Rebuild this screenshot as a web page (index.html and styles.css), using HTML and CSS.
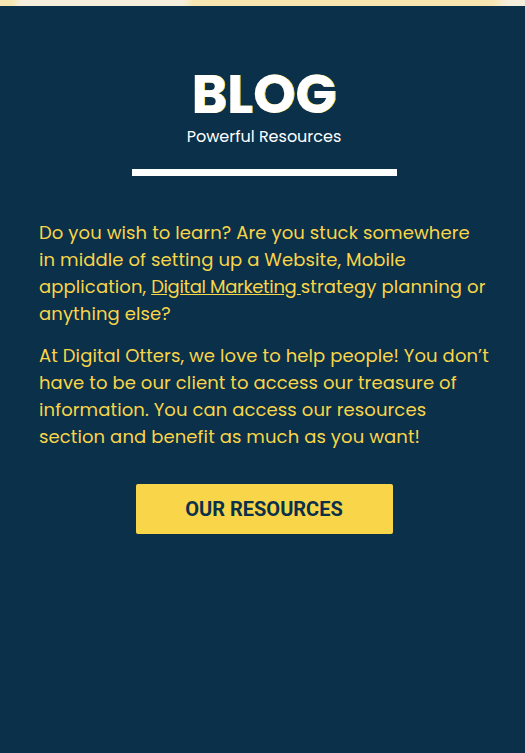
FILE: index.html
```html
<!DOCTYPE html>
<html lang="en">
<head>
<meta charset="utf-8">
<title>Blog</title>
<link rel="stylesheet" href="styles.css">
</head>
<body>
<div class="topstrip"></div>
<section class="blog">
  <header class="blog-head">
    <h1 class="blog-title">BLOG</h1>
    <p class="blog-sub">Powerful Resources</p>
    <div class="blog-rule"></div>
  </header>
  <div class="blog-text">
    <p>Do you wish to learn? Are you stuck somewhere in middle of setting up a Website, Mobile application, <a href="#">Digital Marketing </a>strategy planning or anything else?</p>
    <p>At Digital Otters, we love to help people! You don’t have to be our client to access our treasure of information. You can access our resources section and benefit as much as you want!</p>
  </div>
  <div class="blog-action">
    <a class="btn" href="#">OUR RESOURCES</a>
  </div>
</section>
</body>
</html>
```
FILE: styles.css
```css
html, body {
  margin: 0;
  padding: 0;
}
body {
  background: #0b3049;
  width: 525px;
  height: 753px;
  overflow: hidden;
  font-family: "Poppins", "Open Sans", "Noto Sans", sans-serif;
}
.topstrip {
  height: 6px;
  background: linear-gradient(100deg, #f7e6b1 0 12px, #f5eedc 20px 180px, #f7e6b1 192px 485px, #f5eedc 500px);
}
.blog {
  padding: 0 36px 0 39px;
}
.blog-head {
  display: flex;
  flex-direction: column;
  align-items: center;
  padding-top: 58px;
}
.blog-title {
  margin: 0;
  color: #fff;
  font-weight: 700;
  font-size: 54px;
  line-height: 60px;
  letter-spacing: 0;
  text-shadow: 1px 0 0 #f9d549;
}
.blog-sub {
  margin: 3px 0 0;
  color: #fff;
  font-size: 16px;
  line-height: 20px;
}
.blog-rule {
  width: 265px;
  height: 7px;
  background: #fff;
  margin-top: 22px;
}
.blog-text {
  margin-top: 43px;
  color: #f9d549;
  font-size: 18px;
  letter-spacing: 0.1px;
  line-height: 27px;
}
.blog-text p {
  margin: 0 0 15px;
}
.blog-text a {
  color: #f9d549;
  text-decoration: underline;
  letter-spacing: -0.35px;
}
.blog-action {
  display: flex;
  justify-content: center;
  margin-top: 34px;
}
.btn {
  display: flex;
  align-items: center;
  justify-content: center;
  width: 257px;
  height: 50px;
  background: #f9d549;
  border-radius: 2px;
  color: #0b3049;
  font-family: Roboto, sans-serif;
  font-weight: 700;
  font-size: 20px;
  text-decoration: none;
}
```
